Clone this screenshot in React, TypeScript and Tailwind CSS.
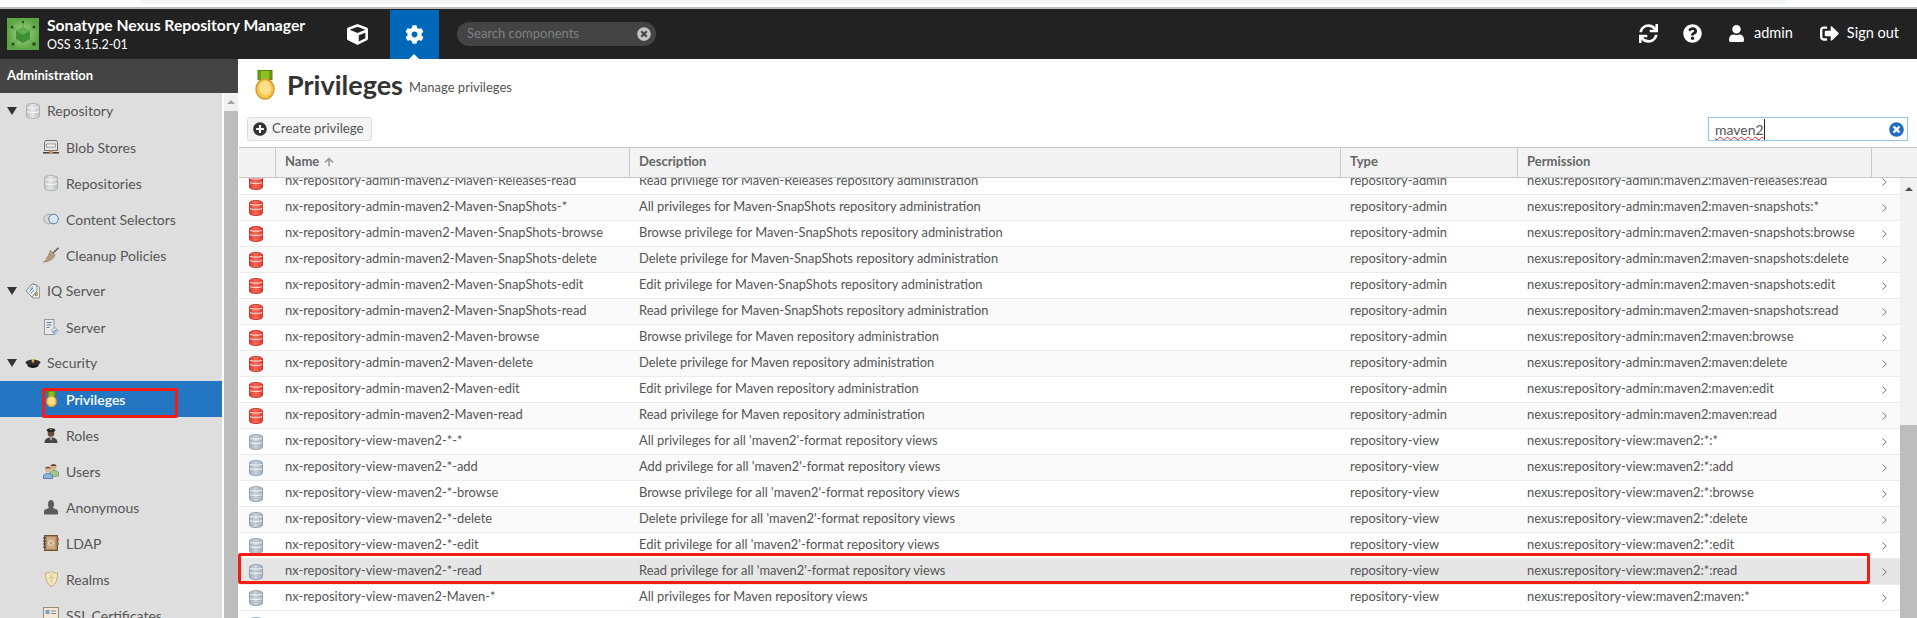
import { FaArrowUp, FaCog, FaCube, FaPlusCircle, FaQuestionCircle, FaSignOutAlt, FaSync, FaTimesCircle, FaUser } from 'react-icons/fa';

type Row = { name: string; desc: string; type: string; perm: string };

const font = 'font-["Lato","Open_Sans",sans-serif]';

const admin = (suffix: string, desc: string, perm: string): Row => ({
  name: `nx-repository-admin-maven2-${suffix}`,
  desc,
  type: 'repository-admin',
  perm: `nexus:repository-admin:maven2:${perm}`,
});

const view = (suffix: string, desc: string, perm: string): Row => ({
  name: `nx-repository-view-maven2-${suffix}`,
  desc,
  type: 'repository-view',
  perm: `nexus:repository-view:maven2:${perm}`,
});

const rows: Row[] = [
  admin('Maven-Releases-read', 'Read privilege for Maven-Releases repository administration', 'maven-releases:read'),
  admin('Maven-SnapShots-*', 'All privileges for Maven-SnapShots repository administration', 'maven-snapshots:*'),
  admin('Maven-SnapShots-browse', 'Browse privilege for Maven-SnapShots repository administration', 'maven-snapshots:browse'),
  admin('Maven-SnapShots-delete', 'Delete privilege for Maven-SnapShots repository administration', 'maven-snapshots:delete'),
  admin('Maven-SnapShots-edit', 'Edit privilege for Maven-SnapShots repository administration', 'maven-snapshots:edit'),
  admin('Maven-SnapShots-read', 'Read privilege for Maven-SnapShots repository administration', 'maven-snapshots:read'),
  admin('Maven-browse', 'Browse privilege for Maven repository administration', 'maven:browse'),
  admin('Maven-delete', 'Delete privilege for Maven repository administration', 'maven:delete'),
  admin('Maven-edit', 'Edit privilege for Maven repository administration', 'maven:edit'),
  admin('Maven-read', 'Read privilege for Maven repository administration', 'maven:read'),
  view('*-*', "All privileges for all 'maven2'-format repository views", '*:*'),
  view('*-add', "Add privilege for all 'maven2'-format repository views", '*:add'),
  view('*-browse', "Browse privilege for all 'maven2'-format repository views", '*:browse'),
  view('*-delete', "Delete privilege for all 'maven2'-format repository views", '*:delete'),
  view('*-edit', "Edit privilege for all 'maven2'-format repository views", '*:edit'),
  view('*-read', "Read privilege for all 'maven2'-format repository views", '*:read'),
  view('Maven-*', 'All privileges for Maven repository views', 'maven:*'),
];

function DbIcon({ top, bottom, line }: { top: string; bottom: string; line: string }) {
  const id = `db-${top.slice(1)}`;
  return (
    <svg width="14" height="16" viewBox="0 0 14 16" className="shrink-0">
      <defs>
        <linearGradient id={id} x1="0" y1="0" x2="1" y2="0">
          <stop offset="0" stopColor={top} />
          <stop offset="0.45" stopColor={bottom} />
          <stop offset="1" stopColor={top} />
        </linearGradient>
      </defs>
      <path d="M.5 3C.5 1.400 3.400.5 7 .5s6.500.9 6.500 2.500v10c0 1.600-2.900 2.500-6.500 2.500S.5 14.600.5 13z" fill={`url(#${id})`} stroke={line} />
      <path d="M1 4.300c1.500 1.100 10.500 1.100 12 0M1 8.600c1.500 1.100 10.500 1.100 12 0" fill="none" stroke="#fff" strokeOpacity="0.9" />
    </svg>
  );
}

const RedDb = () => <DbIcon top="#e03a2e" bottom="#f76a5a" line="#c9392e" />;
const GrayDb = () => <DbIcon top="#a5afbc" bottom="#c9d0da" line="#98a3b1" />;
const PaleDb = () => <DbIcon top="#bfc1c5" bottom="#e4e5e7" line="#aeb0b4" />;

function Medal({ size = 1 }: { size?: number }) {
  return (
    <svg width={20 * size} height={30 * size} viewBox="0 0 20 30" className="shrink-0">
      <rect x="3" y="0.500" width="14" height="9" fill="#6d9e13" stroke="#55810c" />
      <rect x="6" y="1" width="8" height="8" fill="#8cc11f" />
      <ellipse cx="10" cy="19" rx="9" ry="10" fill="#f3c64e" stroke="#d9982b" strokeWidth="1.500" />
      <ellipse cx="10" cy="18" rx="6" ry="7" fill="#fbe08c" />
    </svg>
  );
}

function BlobIcon() {
  return (
    <svg width="16" height="16" viewBox="0 0 16 16">
      <path d="M2.500 1.500h11l1 2v8h-13v-8z" fill="#e3e3e3" stroke="#6c6c6c" />
      <rect x="3.500" y="5" width="9" height="3" fill="#fff" stroke="#777" strokeWidth="0.700" />
      <rect x="0" y="13" width="16" height="1.500" fill="#3d3d3d" />
      <rect x="6" y="11.500" width="4" height="3" fill="#c79a3d" />
    </svg>
  );
}

function SelectorIcon() {
  return (
    <svg width="16" height="12" viewBox="0 0 16 12">
      <circle cx="5.500" cy="6" r="4.800" fill="#d8d8d8" stroke="#a9a9a9" />
      <circle cx="10.500" cy="6" r="4.800" fill="#dfe8f2" fillOpacity="0.800" stroke="#4f7ea8" />
    </svg>
  );
}

function BroomIcon() {
  return (
    <svg width="16" height="16" viewBox="0 0 16 16">
      <path d="M10 6 15.500.8" stroke="#6d6150" strokeWidth="1.600" />
      <path d="M7.500 3.500 12 8c-1 3.500-4.500 6.500-11.500 7C4 13 4 12 3 11.500 5 10 6 7 7.500 3.500z" fill="#b9a27c" stroke="#8e7a5a" strokeWidth="0.700" />
      <path d="M6.500 7 9 10M5 10l2 2" stroke="#8e7a5a" strokeWidth="0.700" />
    </svg>
  );
}

function TagsIcon() {
  return (
    <svg width="16" height="16" viewBox="0 0 16 16">
      <path d="M8 .5 14.500 4v11H7.500z" fill="#f1f1f1" stroke="#9a9a9a" />
      <path d="M7 1 1 8l6 6 5-6V2z" fill="#e9eef3" stroke="#7d8792" />
      <path d="M5 6.500l3-3M4.500 8.500l3.500-3.500M6 10l3-3" stroke="#4e86b4" />
      <path d="M12 9v4" stroke="#c7873a" strokeWidth="1.400" />
      <path d="M10.500 10v3" stroke="#6b9a3e" strokeWidth="1.200" />
    </svg>
  );
}

function ServerIcon() {
  return (
    <svg width="16" height="16" viewBox="0 0 16 16">
      <rect x="1.500" y="0.500" width="9.500" height="15" fill="#e9eaec" stroke="#8f98a3" />
      <path d="M3.500 3.500h5M3.500 6h5M3.500 8.500h3" stroke="#6f7a86" />
      <path d="M8 11.500 11.500 8l4 4-3.500 3.500z" fill="#cfd9e3" stroke="#8f98a3" strokeWidth="0.700" />
      <path d="M10 12l1.500 1.500 2-3" fill="none" stroke="#4e86b4" />
    </svg>
  );
}

function CapIcon() {
  return (
    <svg width="16" height="12" viewBox="0 0 16 12">
      <path d="M.5 5C3 1.500 13 1.500 15.500 5 15.500 7 12 9.500 8 9.500S.5 7 .5 5z" fill="#2f2f2f" />
      <path d="M2.500 9c3 2.500 8 2.500 11 0v-1h-11z" fill="#191919" />
      <rect x="6.800" y="2" width="2.400" height="3.500" fill="#d6b04d" />
    </svg>
  );
}

function OfficerIcon() {
  return (
    <svg width="14" height="16" viewBox="0 0 14 16">
      <path d="M0.500 16c0-4 2.500-5.500 6.500-5.500s6.500 1.500 6.500 5.500z" fill="#44474b" />
      <circle cx="7" cy="6.500" r="3.300" fill="#6a4a35" />
      <path d="M2.500 3C4 .5 10 .5 11.500 3L10 5H4z" fill="#222" />
      <rect x="6.300" y="1.800" width="1.400" height="1.400" fill="#d6b04d" />
      <path d="M6 11l1 3 1-3z" fill="#d9d9d9" />
    </svg>
  );
}

function UsersIcon() {
  return (
    <svg width="16" height="16" viewBox="0 0 16 16">
      <circle cx="10.500" cy="4" r="3" fill="#d7b08a" />
      <path d="M7.500 3c.5-2.500 5.500-2.500 6 0-2 0-4 0-6 0z" fill="#5a3f2a" />
      <path d="M7 14V9c1-2 6-2 8.500 0v4z" fill="#a8c38d" stroke="#6f8f58" strokeWidth="0.700" />
      <circle cx="5" cy="6.500" r="3" fill="#e0b996" />
      <path d="M2 5.500c.5-2.500 5.500-2.500 6 0z" fill="#7a5a3c" />
      <path d="M.5 15.500v-3c1-2.500 7.500-2.500 9 0v3z" fill="#8fb4da" stroke="#3f72a6" strokeWidth="0.800" />
    </svg>
  );
}

function AnonIcon() {
  return (
    <svg width="14" height="16" viewBox="0 0 14 16">
      <path d="M4 5c0-5.500 6-5.500 6 0 0 2-.5 3-1 4 2 1 5 1 5 3.500V15.500H0V12.500C0 10 3 10 5 9c-.5-1-1-2-1-4z" fill="#5c5c5c" />
    </svg>
  );
}

function LdapIcon() {
  return (
    <svg width="16" height="16" viewBox="0 0 16 16">
      <rect x="1.500" y="0.500" width="13" height="15" fill="#a98355" stroke="#6f5233" />
      <rect x="3.500" y="2" width="9" height="12" fill="#c9aa82" />
      <circle cx="8" cy="8" r="2.500" fill="none" stroke="#f0e4d2" />
      <path d="M0 3h3M0 6h3M0 9h3M0 12h3" stroke="#333" />
      <path d="M15 3v3" stroke="#c0503f" strokeWidth="1.500" />
      <path d="M15 7v3" stroke="#5d9a46" strokeWidth="1.500" />
    </svg>
  );
}

function ShieldIcon() {
  return (
    <svg width="13" height="16" viewBox="0 0 13 16">
      <path d="M6.500.5C8 1.500 10 2 12.500 2c.3 6-1.500 11-6 13.500C2 13 .2 8 .5 2 3 2 5 1.500 6.500.5z" fill="#f3e6bd" stroke="#c3ab72" />
      <path d="M6.500 3v9M4 6.500h5" stroke="#dcc88f" strokeWidth="1.300" />
    </svg>
  );
}

function CertIcon() {
  return (
    <svg width="16" height="16" viewBox="0 0 16 16">
      <rect x="0.500" y="0.500" width="15" height="13" fill="#efe8d6" stroke="#9a8f73" />
      <rect x="2.500" y="3" width="4" height="4" fill="#7e9fc4" />
      <path d="M8 4h5M8 6.500h5" stroke="#8a8a8a" />
    </svg>
  );
}

function Caret() {
  return <span className="h-0 w-0 border-x-[5px] border-t-[8px] border-x-transparent border-t-[#333] shrink-0" />;
}

function Section({ label, icon }: { label: string; icon: React.ReactNode }) {
  return (
    <div className="flex h-9 items-center pl-[7px] text-[14px] text-[#555]">
      <Caret />
      <span className="ml-2 flex w-4 justify-center">{icon}</span>
      <span className="ml-[6px] -mt-px">{label}</span>
    </div>
  );
}

function Leaf({ label, icon, active }: { label: string; icon: React.ReactNode; active?: boolean }) {
  return (
    <div className={`flex h-9 items-center pl-[43px] text-[14px] ${active ? 'bg-[#2476c3] font-semibold text-white' : 'text-[#555]'}`}>
      <span className="flex w-4 justify-center">{icon}</span>
      <span className="ml-[7px]">{label}</span>
    </div>
  );
}

function Sidebar() {
  return (
    <aside className="flex w-[238px] shrink-0 flex-col">
      <div className="flex h-[34px] shrink-0 items-center bg-[#444] pl-[7px] text-[13px] font-bold text-white">Administration</div>
      <div className="flex min-h-0 flex-1">
        <nav className="w-[222px] shrink-0 overflow-hidden bg-[#dedede]">
          <Section label="Repository" icon={<PaleDb />} />
          <Leaf label="Blob Stores" icon={<BlobIcon />} />
          <Leaf label="Repositories" icon={<PaleDb />} />
          <Leaf label="Content Selectors" icon={<SelectorIcon />} />
          <Leaf label="Cleanup Policies" icon={<BroomIcon />} />
          <Section label="IQ Server" icon={<TagsIcon />} />
          <Leaf label="Server" icon={<ServerIcon />} />
          <Section label="Security" icon={<CapIcon />} />
          <Leaf label="Privileges" icon={<Medal size={0.55} />} active />
          <Leaf label="Roles" icon={<OfficerIcon />} />
          <Leaf label="Users" icon={<UsersIcon />} />
          <Leaf label="Anonymous" icon={<AnonIcon />} />
          <Leaf label="LDAP" icon={<LdapIcon />} />
          <Leaf label="Realms" icon={<ShieldIcon />} />
          <Leaf label="SSL Certificates" icon={<CertIcon />} />
        </nav>
        <div className="ml-[2px] flex w-[14px] flex-col bg-[#f1f1f1]">
          <div className="flex h-[18px] shrink-0 items-center justify-center">
            <span className="h-0 w-0 border-x-[4px] border-b-[4px] border-x-transparent border-b-[#a3a3a3]" />
          </div>
          <div className="flex-1 bg-[#bdbdbd]" />
        </div>
      </div>
    </aside>
  );
}

function HeaderBar() {
  return (
    <header className="flex h-[50px] shrink-0 bg-[#222] text-white">
      <div className="flex w-[330px] items-center pl-[7px]">
        <svg width="32" height="32" viewBox="0 0 32 32" className="shrink-0">
          <defs>
            <radialGradient id="logo-bg">
              <stop offset="0" stopColor="#a6d88c" />
              <stop offset="1" stopColor="#5ba544" />
            </radialGradient>
          </defs>
          <rect width="32" height="32" fill="url(#logo-bg)" />
          <path d="M16 16 16 4M16 16 5 9M16 16 27 9M16 16 6 26M16 16 27 26" stroke="#5c9a48" strokeWidth="0.700" />
          <path d="M16 9l7 4v8l-7 4-7-4v-8z" fill="#3f8f35" />
          <path d="M9 13l7 4 7-4-7-4z" fill="#5fae4b" />
          <circle cx="16" cy="4" r="1.200" fill="#2a4d23" />
          <circle cx="5" cy="9" r="1.500" fill="#2a4d23" />
          <circle cx="27" cy="9" r="1.500" fill="#2a4d23" />
          <circle cx="6" cy="26" r="1.500" fill="#2a4d23" />
          <circle cx="27" cy="26" r="1.800" fill="#2a4d23" />
        </svg>
        <div className="ml-2">
          <div className="text-[15.7px] leading-[20px] font-bold whitespace-nowrap -mt-px">Sonatype Nexus Repository Manager</div>
          <div className="text-[12.5px] leading-[16px] mt-[2px]">OSS 3.15.2-01</div>
        </div>
      </div>
      <div className="flex w-[54px] items-center justify-center">
        <FaCube size={21} />
      </div>
      <div className="relative ml-[6px] mt-px flex w-[49px] items-center justify-center bg-[#0067b9]">
        <FaCog size={19} />
        <span className="absolute bottom-0 left-[19px] h-0 w-0 border-x-[5px] border-b-[5px] border-x-transparent border-b-white" />
      </div>
      <div className="ml-[18px] mt-[13px] flex h-6 w-[199px] items-center justify-between rounded-full bg-[#444] pl-[10px] pr-[5px] text-[13px] text-[#808080]">
        <span>Search components</span>
        <FaTimesCircle size={14} className="text-[#c4c4c4]" />
      </div>
      <div className="ml-auto flex items-center pr-[18px] text-[14.5px] -mt-[2px]">
        <FaSync size={19} />
        <FaQuestionCircle size={19} className="ml-[25px]" />
        <FaUser size={17} className="ml-[26px]" />
        <span className="ml-[9px]">admin</span>
        <FaSignOutAlt size={19} className="ml-[27px]" />
        <span className="ml-[8px]">Sign out</span>
      </div>
    </header>
  );
}

const cols = 'grid grid-cols-[36px_354px_711px_177px_354px_1fr]';

function Table() {
  return (
    <div className="flex min-h-0 flex-1 flex-col border-t border-[#c8c8c8]">
      <div className={`${cols} h-[30px] shrink-0 border-b border-[#c8c8c8] bg-[#f3f3f3] text-[13px] font-bold text-[#666]`}>
        <div />
        {['Name', 'Description', 'Type', 'Permission'].map(h => (
          <div key={h} className="flex items-center border-l border-[#c8c8c8] pl-[9px] pb-[2px]">
            {h}
            {h === 'Name' && <FaArrowUp size={10} className="ml-[5px] text-[#999]" />}
          </div>
        ))}
        <div className="border-l border-[#c8c8c8]" />
      </div>
      <div className="flex min-h-0 flex-1">
        <div className="min-w-0 flex-1 overflow-hidden">
          <div className="-mt-[9px]">
            {rows.map((r, i) => (
              <div
                key={r.name}
                className={`${cols} h-[26px] items-center border-b border-[#ebebeb] text-[12.9px] text-[#555] ${r.name.endsWith('*-read') ? 'bg-[#e6e6e6]' : i % 2 ? 'bg-[#fafafa]' : 'bg-white'}`}
              >
                <div className="flex justify-center pr-[2px]">{r.type === 'repository-admin' ? <RedDb /> : <GrayDb />}</div>
                <div className="pl-[10px] pb-[2px] whitespace-nowrap">{r.name}</div>
                <div className="pl-[10px] pb-[2px] whitespace-nowrap">{r.desc}</div>
                <div className="pl-[10px] pb-[2px]">{r.type}</div>
                <div className="pl-[10px] pb-[2px] whitespace-nowrap">{r.perm}</div>
                <div className="pl-[11px]">
                  <svg width="5" height="8" viewBox="0 0 5 8">
                    <path d="M.5.500 4.300 4 .5 7.500" fill="none" stroke="#777" />
                  </svg>
                </div>
              </div>
            ))}
            {/* next row only peeks in at the bottom edge: just the top of its icon */}
            <div className="flex h-[26px] justify-center pt-[6px] w-[34px]">
              <GrayDb />
            </div>
          </div>
        </div>
        <div className="flex w-[17px] shrink-0 flex-col bg-[#f1f1f1]">
          <div className="flex h-[22px] items-center justify-center">
            <span className="h-0 w-0 border-x-[4px] border-b-[4px] border-x-transparent border-b-[#505050]" />
          </div>
          <div className="mt-[225px] flex-1 bg-[#bdbdbd]" />
        </div>
      </div>
    </div>
  );
}

export default function App() {
  return (
    <div className={`relative flex h-[618px] w-[1917px] flex-col overflow-hidden bg-white ${font}`}>
      <div className="h-[9px] shrink-0 border-b-2 border-[#bdbdbd] bg-white">
        <div className="ml-[140px] h-[4px] w-[1647px] rounded-b-lg bg-[#f1f3f4]" />
      </div>
      <HeaderBar />
      <div className="flex min-h-0 flex-1">
        <Sidebar />
        <main className="flex min-w-0 flex-1 flex-col pl-px">
          <div className="flex h-[58px] shrink-0 items-center pl-4 pb-[7px]">
            <Medal />
            <h1 className="ml-3 text-[27px] leading-none font-bold text-[#333]">Privileges</h1>
            <span className="ml-[6px] mt-[6px] text-[13px] text-[#555]">Manage privileges</span>
          </div>
          <div className="flex h-[30px] shrink-0 items-start justify-between pl-2 pr-[9px]">
            <button type="button" className="flex h-6 w-[125px] items-center rounded-[3px] border border-[#ddd] bg-[#f4f4f4] pl-[5px] text-[13.3px] text-[#555]">
              <FaPlusCircle size={14} className="text-[#333]" />
              <span className="ml-[5px]">Create privilege</span>
            </button>
            <div className="flex h-6 w-[200px] items-center justify-between border border-[#93c6ec] pl-[6px] pr-[3px] text-[14px] text-[#555]">
              <span className="border-r border-[#222] underline decoration-wavy decoration-[#e02020] decoration-1">maven2</span>
              <FaTimesCircle size={15} className="text-[#1f6fc0]" />
            </div>
          </div>
          <Table />
        </main>
      </div>
      {/* red annotation boxes drawn on the screenshot */}
      <div className="absolute left-[42px] top-[388px] h-[30px] w-[136px] rounded-[2px] border-[3px] border-[#f51c14]" />
      <div className="absolute left-[238px] top-[553px] h-[31px] w-[1632px] rounded-[2px] border-[3px] border-[#f51c14]" />
    </div>
  );
}
